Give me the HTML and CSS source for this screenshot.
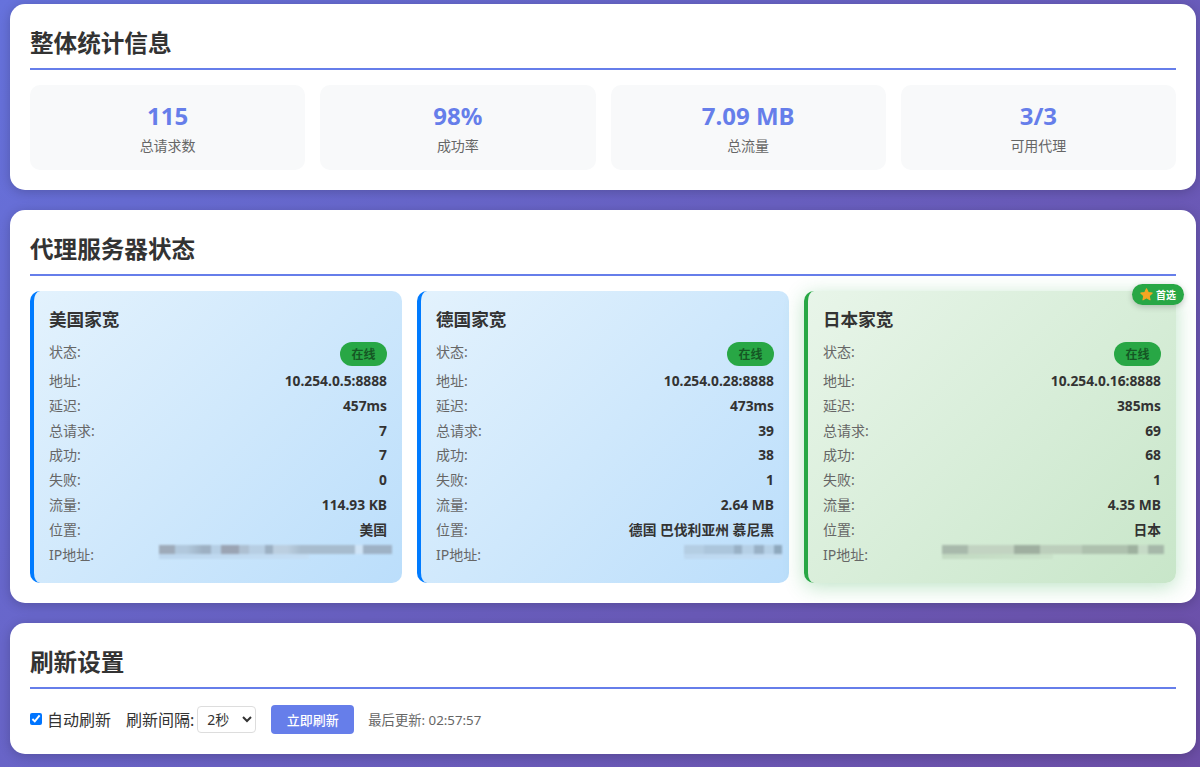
FILE: index.html
```html
<!DOCTYPE html>
<html lang="zh-CN">
<head>
    <meta charset="UTF-8">
    <meta name="viewport" content="width=device-width, initial-scale=1.0">
    <title>代理服务器状态</title>
    <link rel="stylesheet" href="styles.css">
</head>
<body>
    <div class="container">
        <section class="panel">
            <h2>整体统计信息</h2>
            <div class="stats">
                <div class="stat"><div class="stat-value">115</div><div class="stat-label">总请求数</div></div>
                <div class="stat"><div class="stat-value">98%</div><div class="stat-label">成功率</div></div>
                <div class="stat"><div class="stat-value">7.09 MB</div><div class="stat-label">总流量</div></div>
                <div class="stat"><div class="stat-value">3/3</div><div class="stat-label">可用代理</div></div>
            </div>
        </section>

        <section class="panel">
            <h2>代理服务器状态</h2>
            <div class="proxies">
                <div class="proxy">
                    <h3>美国家宽</h3>
                    <div class="row status-row"><span>状态:</span><span class="pill">在线</span></div>
                    <div class="row"><span>地址:</span><b>10.254.0.5:8888</b></div>
                    <div class="row"><span>延迟:</span><b>457ms</b></div>
                    <div class="row"><span>总请求:</span><b>7</b></div>
                    <div class="row"><span>成功:</span><b>7</b></div>
                    <div class="row"><span>失败:</span><b>0</b></div>
                    <div class="row"><span>流量:</span><b>114.93 KB</b></div>
                    <div class="row"><span>位置:</span><b>美国</b></div>
                    <div class="row"><span>IP地址:</span><i class="masked masked-us"></i></div>
                </div>
                <div class="proxy">
                    <h3>德国家宽</h3>
                    <div class="row status-row"><span>状态:</span><span class="pill">在线</span></div>
                    <div class="row"><span>地址:</span><b>10.254.0.28:8888</b></div>
                    <div class="row"><span>延迟:</span><b>473ms</b></div>
                    <div class="row"><span>总请求:</span><b>39</b></div>
                    <div class="row"><span>成功:</span><b>38</b></div>
                    <div class="row"><span>失败:</span><b>1</b></div>
                    <div class="row"><span>流量:</span><b>2.64 MB</b></div>
                    <div class="row"><span>位置:</span><b>德国 巴伐利亚州 慕尼黑</b></div>
                    <div class="row"><span>IP地址:</span><i class="masked masked-de"></i></div>
                </div>
                <div class="proxy preferred">
                    <span class="badge">
                        <svg viewBox="0 0 24 24" width="13" height="13"><path d="M12 1.500l3.200 6.900 7.300.9-5.400 5.100 1.400 7.400L12 18.200l-6.500 3.600 1.400-7.400L1.500 9.300l7.300-.9z" fill="#f5a623" stroke="#f5a623" stroke-width="2" stroke-linejoin="round"/></svg>
                        首选
                    </span>
                    <h3>日本家宽</h3>
                    <div class="row status-row"><span>状态:</span><span class="pill">在线</span></div>
                    <div class="row"><span>地址:</span><b>10.254.0.16:8888</b></div>
                    <div class="row"><span>延迟:</span><b>385ms</b></div>
                    <div class="row"><span>总请求:</span><b>69</b></div>
                    <div class="row"><span>成功:</span><b>68</b></div>
                    <div class="row"><span>失败:</span><b>1</b></div>
                    <div class="row"><span>流量:</span><b>4.35 MB</b></div>
                    <div class="row"><span>位置:</span><b>日本</b></div>
                    <div class="row"><span>IP地址:</span><i class="masked masked-jp"></i></div>
                </div>
            </div>
        </section>

        <section class="panel">
            <h2>刷新设置</h2>
            <div class="controls">
                <label class="auto"><input type="checkbox" checked>自动刷新</label>
                <label class="interval">刷新间隔:
                    <select><option>2秒</option><option>5秒</option><option>10秒</option></select>
                </label>
                <button>立即刷新</button>
                <span class="updated">最后更新: 02:57:57</span>
            </div>
        </section>
    </div>
</body>
</html>
```

FILE: styles.css
```css
* {
    box-sizing: border-box;
}
html, body {
    height: 767px;
    overflow: hidden;
}
body {
    margin: 0;
    font-family: "Noto Sans", "Noto Sans CJK SC", sans-serif;
    background: linear-gradient(135deg, #6672dc 0%, #6c4ea6 100%);
    color: #333;
}
.container {
    display: flex;
    flex-direction: column;
    gap: 20px;
    padding: 4px 4px 14px 10px;
}
.panel {
    background: white;
    border-radius: 15px;
    padding: 20px;
    box-shadow: 0 2px 12px rgba(0,0,0,0.2);
}
h2 {
    margin: 0 0 15px;
    height: 46px;
    font-size: 23.6px;
    line-height: 38px;
    font-weight: 700;
    color: #333;
    border-bottom: 2px solid #667eea;
}
.stats {
    display: grid;
    grid-template-columns: repeat(4, 1fr);
    gap: 15px;
}
.stat {
    height: 85px;
    padding-top: 14px;
    background: #f8f9fa;
    border-radius: 10px;
    text-align: center;
}
.stat-value {
    font-size: 24px;
    line-height: 34px;
    font-weight: 700;
    color: #667eea;
}
.stat-label {
    margin-top: 3px;
    font-size: 14px;
    line-height: 20px;
    color: #666;
}
.proxies {
    display: grid;
    grid-template-columns: repeat(3, 1fr);
    gap: 15px;
}
.proxy {
    position: relative;
    height: 292px;
    padding: 15px 15px 0 15px;
    border-left: 4px solid #007bff;
    border-radius: 10px;
    background: linear-gradient(135deg, #e3f2fd 0%, #bbdefb 100%);
}
.proxy.preferred {
    border-left-color: #28a745;
    background: linear-gradient(135deg, #e8f5e9 0%, #c8e6c9 100%);
    box-shadow: 0 4px 20px rgba(40,167,69,0.3);
}
h3 {
    margin: 0 0 10px;
    font-size: 17.6px;
    line-height: 26px;
    font-weight: 700;
    color: #333;
}
.row {
    display: flex;
    justify-content: space-between;
    height: 24.8px;
    font-size: 14px;
    line-height: 20px;
    color: #666;
}
.row b {
    color: #333;
    font-weight: 700;
    font-size: 13.8px;
}
.status-row {
    height: 29px;
}
.pill {
    height: 24px;
    padding: 0 11.5px;
    border-radius: 12px;
    background: #28a745;
    color: #155724;
    font-size: 12px;
    font-weight: 700;
    line-height: 25px;
}
.badge {
    position: absolute;
    top: -7px;
    right: -8px;
    display: flex;
    align-items: center;
    gap: 3px;
    height: 21px;
    padding: 0 8px;
    border-radius: 11px;
    background: #28a745;
    color: white;
    font-size: 10px;
    font-weight: 700;
    box-shadow: 0 2px 6px rgba(0,0,0,0.2);
}
.masked {
    display: block;
    height: 14px;
    margin: 0 -5px 0 0;
    filter: blur(1.2px);
    opacity: 0.75;
}
.masked-us {
    width: 233px;
    background:
        linear-gradient(90deg, #8f97a3 0 16px, #a9bfd3 16px 28px, #8f9fb0 44px 52px, #b0c8de 52px 62px, #8c8f9c 62px 80px, #a6b4c4 80px 90px, #b3c8dc 90px 106px, #8f9fb0 106px 114px, #b9c9d8 114px 128px, #9fb0bf 142px 196px, #d5e6f6 196px 204px, #94a3b4 204px 233px) top / 100% 9px no-repeat,
        linear-gradient(90deg, #b8d2ea, #c4dcf2) 0 9px / 150px 5px no-repeat;
}
.masked-de {
    width: 98px;
    margin-right: -8px;
    background:
        linear-gradient(90deg, #b0c8dc 0 20px, #a5bdd2 20px 50px, #8da2b5 50px 58px, #b3cbe0 58px 70px, #8da2b5 70px 80px, #b3cbe0 80px 90px, #7f96a9 90px 98px) top / 100% 9px no-repeat,
        linear-gradient(90deg, #bcd5ec, #c4dcf2) 0 9px / 100% 5px no-repeat;
}
.masked-jp {
    width: 222px;
    margin-right: -3px;
    background:
        linear-gradient(90deg, #9aa99e 0 26px, #bdccbc 26px 72px, #8f9c90 72px 98px, #b6c6b5 98px 140px, #a4b4a4 140px 186px, #8f9f90 186px 196px, #c4d6c4 196px 206px, #9aa99e 206px 222px) top / 100% 9px no-repeat,
        linear-gradient(90deg, #bdd4bc, #c8e0c8) 0 9px / 50% 5px no-repeat;
}
.controls {
    display: flex;
    align-items: center;
    height: 30px;
    font-size: 16px;
    color: #333;
}
.auto {
    display: flex;
    align-items: center;
    gap: 5px;
}
.auto input {
    width: 12px;
    height: 12px;
    margin: 0;
    accent-color: #0075ff;
}
.interval {
    display: flex;
    align-items: center;
    gap: 3px;
    margin-left: 15px;
}
select {
    width: 59px;
    height: 27px;
    padding: 0 5px;
    border: 1px solid #ddd;
    border-radius: 4px;
    background: white;
    font: inherit;
    font-size: 14px;
    color: #333;
}
button {
    height: 29px;
    width: 83px;
    margin-left: 15px;
    border: none;
    border-radius: 4px;
    background: #667eea;
    color: white;
    font: inherit;
    font-size: 13px;
    font-weight: 500;
    cursor: pointer;
}
.updated {
    margin-left: 14px;
    font-size: 13.3px;
    color: #666;
}
```
